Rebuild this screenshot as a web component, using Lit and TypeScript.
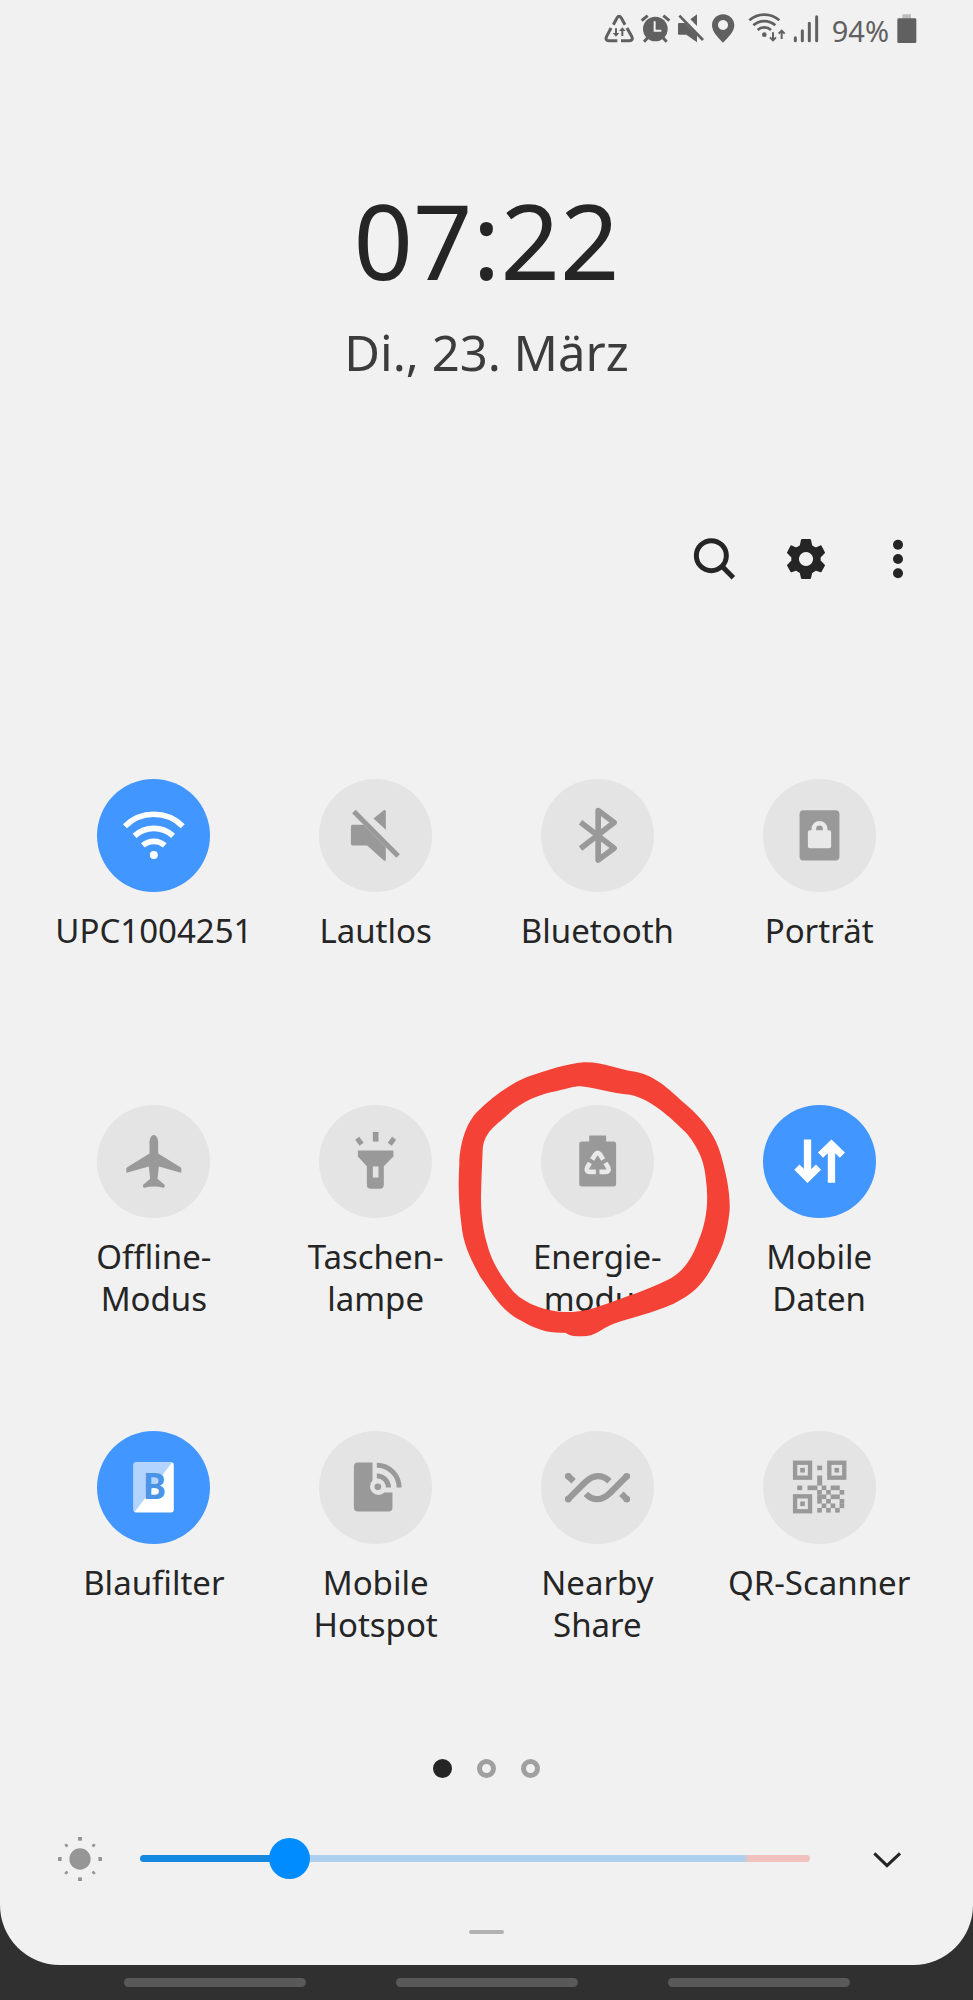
import { LitElement, html, svg, css, nothing } from "lit";
import { customElement, state } from "lit/decorators.js";
import { classMap } from "lit/directives/class-map.js";

interface Tile {
  id: string;
  lines: string[];
  on: boolean;
  marked?: boolean;
}

const TILES: Tile[] = [
  { id: "wifi", lines: ["UPC1004251"], on: true },
  { id: "mute", lines: ["Lautlos"], on: false },
  { id: "bluetooth", lines: ["Bluetooth"], on: false },
  { id: "portrait", lines: ["Porträt"], on: false },
  { id: "plane", lines: ["Offline-", "Modus"], on: false },
  { id: "torch", lines: ["Taschen-", "lampe"], on: false },
  { id: "energy", lines: ["Energie-", "modus"], on: false, marked: true },
  { id: "data", lines: ["Mobile", "Daten"], on: true },
  { id: "bluefilter", lines: ["Blaufilter"], on: true },
  { id: "hotspot", lines: ["Mobile", "Hotspot"], on: false },
  { id: "nearby", lines: ["Nearby", "Share"], on: false },
  { id: "qr", lines: ["QR-Scanner"], on: false },
];

const QR_ROWS = [".#.##.", "#.#..#", "##.##.", "#.#..#", ".#.#.#", "#.#.#."];

const finder = (x: number, y: number) => svg`
  <rect x=${x + 6.5} y=${y + 6.5} width="45" height="45" fill="none" stroke="currentColor" stroke-width="13"/>
  <rect x=${x + 22} y=${y + 22} width="14" height="14"/>`;

/* Tile glyphs, drawn on a 340-unit disc. */
const GLYPHS: Record<string, unknown> = {
  wifi: svg`
    <g fill="none" stroke="currentColor" stroke-width="17">
      <path d="M84 142A123 123 0 0 1 258 142"/>
      <path d="M113 171A86 86 0 0 1 229 171"/>
      <path d="M138 200A51 51 0 0 1 204 200"/>
    </g>
    <circle cx="171" cy="229" r="12"/>`,
  mute: svg`
    <path d="M101 138H134L201 205V242q0 7-6 3L145 200H101q-5 0-5-5V143q0-5 5-5z"/>
    <path d="M164 119L195 94q6-3 6 4V153z"/>
    <path d="M105 98L238 232" stroke="currentColor" stroke-width="15"/>`,
  bluetooth: svg`
    <path d="M119 130L220 208L172 244V95L220 131L119 209" fill="none" stroke="currentColor"
      stroke-width="17" stroke-linejoin="round"/>`,
  portrait: svg`
    <rect x="110" y="94" width="120" height="151" rx="12"/>
    <rect class="hole" x="135" y="154" width="70" height="54" rx="6"/>
    <path class="hole-line" d="M153 157V150a17 17 0 0 1 34 0V157" stroke-width="14"/>`,
  plane: svg`
    <path d="M171 90C180 90 184 104 184 112V146L251 187Q256 191 253 204L186 185L182 222L203 240Q206 247 200 249Q171 241 142 249Q136 247 139 240L160 222L156 185L89 204Q86 191 91 187L158 146V112C158 104 162 90 171 90Z"/>`,
  torch: svg`
    <path fill-rule="evenodd" d="M117 137H224V155L195 184V240q0 12-12 12H156q-12 0-12-12V184L117 155zM162 185V218H179V185z"/>
    <rect x="162" y="81" width="17" height="29"/>
    <path d="M115 100L128 118M226 100L213 118" stroke="currentColor" stroke-width="15"/>`,
  energy: svg`
    <path d="M145 92H196V110H218q8 0 8 8V237q0 8-8 8H123q-8 0-8-8V118q0-8 8-8H145z"/>
    <g class="hole-line" stroke-width="14">
      <path d="M154 164L163 149Q170 139 178 149L187 164"/>
      <path d="M147 174L139 188Q134 201 147 201H165"/>
      <path d="M194 174L202 188Q207 201 194 201H176"/>
    </g>`,
  data: svg`
    <g fill="none" stroke="currentColor" stroke-width="22">
      <path d="M134 104V220M102 187L134 219L167 187"/>
      <path d="M206 234V118M173 151L206 119L239 151"/>
    </g>`,
  bluefilter: svg`
    <rect x="110" y="94" width="121" height="151" rx="8"/>
    <path class="shade" d="M118 94H226L114 243Q110 241 110 237V102Q110 94 118 94z"/>
    <text class="letter" x="173" y="204" text-anchor="middle">B</text>`,
  hotspot: svg`
    <path d="M117 95H161V149A25 25 0 1 0 197 185H221V230q0 12-12 12H117q-12 0-12-12V107q0-12 12-12z"/>
    <circle cx="177" cy="168" r="10"/>
    <g fill="none" stroke="currentColor" stroke-width="15">
      <path d="M174 103A67 67 0 0 1 241 170"/>
      <path d="M174 135A35 35 0 0 1 209 170"/>
    </g>`,
  nearby: svg`
    <g fill="none" stroke="currentColor" stroke-width="19">
      <path d="M82 136L98 151"/>
      <path d="M82 205L130 157Q151 136 171 136Q190 136 206 151"/>
      <path d="M258 136L210 184Q189 205 169 205Q150 205 135 189"/>
      <path d="M258 205L242 189"/>
    </g>
    <circle cx="82" cy="136" r="10"/><circle cx="82" cy="205" r="10"/>
    <circle cx="258" cy="136" r="10"/><circle cx="258" cy="205" r="10"/>`,
  qr: svg`
    ${finder(90, 89)}${finder(193, 89)}${finder(90, 190)}
    <rect x="163" y="104" width="15" height="14"/>
    <rect x="103" y="164" width="15" height="14"/>
    <rect x="134" y="164" width="30" height="14"/>
    <rect x="163" y="134" width="15" height="30"/>
    ${QR_ROWS.map((row, r) =>
      [...row].map((cell, c) =>
        cell === "#"
          ? svg`<rect x=${163 + c * 13.5} y=${164 + r * 13.5} width="14" height="14"/>`
          : nothing
      )
    )}`,
};

@customElement("status-bar")
export class StatusBar extends LitElement {
  static styles = css`
    :host {
      display: flex;
      justify-content: flex-end;
      align-items: flex-start;
      gap: 13px;
      padding: 13px 56px 0;
      color: #606060;
    }
    .group {
      display: flex;
      gap: 6px;
    }
    .power {
      display: flex;
      gap: 8px;
    }
    .percent {
      font-size: 29px;
      line-height: 36px;
    }
    svg {
      display: block;
      height: 30px;
      fill: currentColor;
    }
    .line {
      fill: none;
      stroke: currentColor;
    }
    .cut {
      fill: none;
      stroke: #f1f1f1;
    }
    .tip {
      fill: #bdbdbd;
    }
  `;

  render() {
    return html`
      <div class="group">
        <svg viewBox="39 38 90 90" width="30" aria-hidden="true">
          <g class="line" stroke-width="9" stroke-linejoin="round">
            <path d="M67 73L78 53Q84 43 91 53L102 73" />
            <path d="M60 83L47 108Q41 121 54 121H79" />
            <path d="M108 83L122 108Q128 121 115 121H90" />
          </g>
          <path class="line" stroke-width="6" d="M75 84V103M94 107V88" />
          <path d="M65 98H85L75 109zM84 92H104L94 81z" />
        </svg>
        <svg viewBox="147 38 93 90" width="31" aria-hidden="true">
          <circle cx="193" cy="86" r="37" />
          <path class="line" stroke-width="9" d="M152 61L170 46M217 46L235 61" />
          <path class="line" stroke-width="9" d="M170 112L159 124M216 112L227 124" />
          <path class="cut" stroke-width="6" d="M191 63V91H211" />
        </svg>
        <svg viewBox="258 38 84 90" width="28" aria-hidden="true">
          <path d="M264 68H281L318 105V126L286 103H264q-3 0-3-3V71q0-3 3-3z" />
          <path d="M298 57L318 42V77z" />
          <path class="line" stroke-width="8" d="M265 46L336 119" />
        </svg>
        <svg viewBox="363 38 72 90" width="24" aria-hidden="true">
          <path fill-rule="evenodd"
            d="M399 42C419 42 433 57 433 75C433 94 414 112 399 127C384 112 366 94 366 75C366 57 380 42 399 42zM399 59a15 15 0 1 0 .1 0z" />
        </svg>
      </div>
      <div class="group">
        <svg viewBox="474 38 117 90" width="39" aria-hidden="true">
          <g class="line" stroke-width="8">
            <path d="M478 60A68 68 0 0 1 568 60" />
            <path d="M490 75A49 49 0 0 1 556 75" />
            <path d="M503 89A30 30 0 0 1 543 89" />
          </g>
          <circle cx="523" cy="103" r="7" />
          <g class="line" stroke-width="6">
            <path d="M549 96V120M540 111L549 120L558 111" />
            <path d="M575 116V91M566 100L575 91L584 100" />
          </g>
        </svg>
        <svg viewBox="609 38 78 90" width="26" aria-hidden="true">
          <path class="line" stroke-width="9" stroke-linecap="round"
            d="M616 112V121M637 91V121M658 69V121M680 49V121" />
        </svg>
      </div>
      <div class="power">
        <span class="percent">94%</span>
        <svg viewBox="921 38 60 90" width="20" aria-hidden="true">
          <path class="tip" d="M937 42H963V56H937z" />
          <rect x="922" y="54" width="57" height="74" rx="4" />
        </svg>
      </div>
    `;
  }
}

@customElement("quick-tile")
export class QuickTile extends LitElement {
  static properties = { tile: { attribute: false } };
  declare tile: Tile;

  static styles = css`
    :host {
      display: block;
      position: relative;
    }
    .tile {
      display: flex;
      flex-direction: column;
      align-items: center;
      gap: 18px;
      width: 100%;
      padding: 0;
      border: 0;
      background: none;
      font: inherit;
      color: #252525;
      cursor: pointer;
    }
    .disc {
      width: 113px;
      height: 113px;
      border-radius: 50%;
      background: #e4e4e4;
      color: #999999;
    }
    .disc.on {
      background: #4296ff;
      color: #ffffff;
    }
    .glyph {
      display: block;
      width: 100%;
      fill: currentColor;
    }
    .glyph .hole {
      fill: #e9e9e9;
    }
    .glyph .hole-line {
      fill: none;
      stroke: #e9e9e9;
    }
    .glyph .shade {
      fill: #b3d4ff;
    }
    .glyph .letter {
      fill: #4a94e8;
      font-size: 106px;
      font-weight: 700;
    }
    .label {
      min-height: 84px;
      font-size: 33px;
      line-height: 42px;
      white-space: nowrap;
    }
    .mark {
      position: absolute;
      z-index: 1;
      top: -43px;
      left: calc(50% - 139px);
      width: 272px;
      fill: #f44336;
      pointer-events: none;
    }
  `;

  render() {
    const { id, lines, on, marked } = this.tile;
    return html`
      <button class="tile" type="button" aria-pressed=${on ? "true" : "false"}>
        <span class=${classMap({ disc: true, on })}>
          <svg class="glyph" viewBox="0 0 340 340" aria-hidden="true">${GLYPHS[id]}</svg>
        </span>
        <span class="label">${lines.map((l, i) => (i ? html`<br />${l}` : l))}</span>
      </button>
      ${marked
        ? html`<svg class="mark" viewBox="53 35 816 824" aria-hidden="true">
            <path fill-rule="evenodd"
              d="M430 36C490 34 530 58 585 64C650 76 695 126 735 161C795 212 828 262 842 315C858 370 870 430 868 480C862 540 850 590 820 640C790 700 760 730 700 760C630 790 570 802 520 820C480 835 465 860 420 858C390 858 385 852 375 847C330 850 290 840 240 810C180 780 150 720 120 680C90 625 68 580 63 520C55 460 53 400 57 340C57 290 75 220 110 185C150 145 200 105 260 80C320 60 380 40 430 36Z
                 M420 108C470 112 510 130 570 133C630 145 690 200 740 250C780 300 793 340 797 390C805 450 800 510 775 570C750 640 720 670 680 690C620 720 560 738 500 760C460 772 440 785 370 785C320 782 260 765 220 725C190 690 155 640 140 580C125 530 122 480 122 440C123 390 125 350 127 300C130 250 160 230 200 195C240 155 300 130 350 122C380 115 400 108 420 108Z" />
          </svg>`
        : nothing}
    `;
  }
}

@customElement("app-root")
export class AppRoot extends LitElement {
  @state() private brightness = 41;
  @state() private page = 0;

  static styles = css`
    :host {
      display: flex;
      flex-direction: column;
      min-height: 100vh;
      background: #303030;
      font-family: "Noto Sans", "Open Sans", sans-serif;
    }
    .panel {
      flex: 1;
      display: flex;
      flex-direction: column;
      padding-bottom: 31px;
      border-radius: 0 0 60px 60px;
      background: #f1f1f1;
      color: #252525;
    }
    .clock {
      margin-top: 139px;
      text-align: center;
    }
    .time {
      display: block;
      font-size: 104px;
      line-height: 104px;
    }
    .date {
      display: block;
      margin-top: 30px;
      font-size: 49px;
      line-height: 60px;
      color: #3c3c3c;
    }
    .tools {
      display: flex;
      justify-content: flex-end;
      gap: 32px;
      margin-top: 147px;
      padding: 0 45px;
    }
    .icon-button {
      flex: none;
      width: 60px;
      padding: 0;
      border: 0;
      background: none;
      color: #252525;
      cursor: pointer;
    }
    .icon-button svg {
      display: block;
      width: 60px;
      fill: currentColor;
    }
    .icon-button .line {
      fill: none;
      stroke: currentColor;
    }
    .tiles {
      display: grid;
      grid-template-columns: repeat(4, minmax(0, 1fr));
      row-gap: 111px;
      margin-top: 190px;
      padding: 0 43px;
    }
    .pager {
      display: flex;
      justify-content: center;
      gap: 25px;
      margin-top: 113px;
    }
    .dot {
      width: 19px;
      height: 19px;
      padding: 0;
      border: 5px solid #a0a0a0;
      border-radius: 50%;
      background: none;
      cursor: pointer;
    }
    .dot.current {
      border-color: #252525;
      background: #252525;
    }
    .brightness {
      display: flex;
      align-items: center;
      height: 41px;
      margin-top: 60px;
      padding: 0 56px 0 58px;
    }
    .sun {
      flex: none;
      width: 44px;
      fill: #969696;
    }
    .slider {
      flex: 1;
      min-width: 0;
      height: 41px;
      margin: 0 47px 0 38px;
      appearance: none;
      -webkit-appearance: none;
      background: none;
    }
    .slider::-webkit-slider-runnable-track {
      height: 7px;
      border-radius: 4px;
      background: linear-gradient(
        to right,
        #1488e0 var(--level),
        #acd0ed var(--level),
        #acd0ed 90%,
        #f1c1be 91%
      );
    }
    .slider::-webkit-slider-thumb {
      -webkit-appearance: none;
      width: 41px;
      height: 41px;
      margin-top: -17px;
      border-radius: 50%;
      background: #008cff;
    }
    .grip {
      align-self: center;
      width: 35px;
      height: 4px;
      margin-top: 51px;
      border-radius: 2px;
      background: #b2b2b2;
    }
    .nav {
      display: flex;
      justify-content: center;
      gap: 90px;
      padding: 13px 0;
    }
    .pill {
      width: 182px;
      height: 9px;
      padding: 0;
      border: 0;
      border-radius: 5px;
      background: #595959;
    }
  `;

  private onBrightness(e: Event) {
    this.brightness = Number((e.target as HTMLInputElement).value);
  }

  render() {
    return html`
      <main class="panel">
        <status-bar></status-bar>
        <header class="clock">
          <time class="time">07:22</time>
          <time class="date">Di., 23. März</time>
        </header>
        <div class="tools">
          <button class="icon-button" type="button" aria-label="Suchen">
            <svg viewBox="0 0 180 180" aria-hidden="true">
              <circle class="line" cx="82" cy="80" r="45" stroke-width="15" />
              <path class="line" d="M114 112L148 146" stroke-width="15" />
            </svg>
          </button>
          <button class="icon-button" type="button" aria-label="Einstellungen">
            <svg viewBox="0 0 180 180" aria-hidden="true">
              <path fill-rule="evenodd" stroke="currentColor" stroke-width="6" stroke-linejoin="round"
                d="M78 33H102L106 51L119 59L134 52L144 71L131 84V96L144 109L134 127L119 122L106 130L102 147H78L74 130L61 122L46 127L36 109L49 96V84L36 71L46 52L61 59L74 51zM90 66a24 24 0 1 0 .1 0z" />
            </svg>
          </button>
          <button class="icon-button" type="button" aria-label="Mehr Optionen">
            <svg viewBox="0 0 180 180" aria-hidden="true">
              <circle cx="90" cy="47" r="15" /><circle cx="90" cy="90" r="15" /><circle cx="90" cy="133" r="15" />
            </svg>
          </button>
        </div>
        <section class="tiles">
          ${TILES.map((tile) => html`<quick-tile .tile=${tile}></quick-tile>`)}
        </section>
        <nav class="pager">
          ${[0, 1, 2].map(
            (i) => html`<button
              type="button"
              class=${classMap({ dot: true, current: i === this.page })}
              aria-label="Seite ${i + 1}"
              @click=${() => (this.page = i)}
            ></button>`
          )}
        </nav>
        <div class="brightness">
          <svg class="sun" viewBox="0 0 132 132" aria-hidden="true">
            <circle cx="66" cy="66" r="32" />
            ${[0, 90, 180, 270].map(
              (a) => svg`<rect x="60" y="0" width="12" height="11" transform="rotate(${a} 66 66)"/>`
            )}
            ${[45, 135, 225, 315].map(
              (a) => svg`<rect x="62" y="3" width="8" height="10" rx="2" transform="rotate(${a} 66 66)"/>`
            )}
          </svg>
          <input
            class="slider"
            type="range"
            min="0"
            max="200"
            aria-label="Helligkeit"
            style="--level: ${this.brightness / 2}%"
            .value=${String(this.brightness)}
            @input=${this.onBrightness}
          />
          <button class="icon-button" type="button" aria-label="Ausklappen">
            <svg viewBox="0 0 180 120" aria-hidden="true">
              <path class="line" d="M52 43L90 80L129 43" stroke-width="9" />
            </svg>
          </button>
        </div>
        <div class="grip"></div>
      </main>
      <footer class="nav">
        <button class="pill" type="button" aria-label="Letzte Apps"></button>
        <button class="pill" type="button" aria-label="Startseite"></button>
        <button class="pill" type="button" aria-label="Zurück"></button>
      </footer>
    `;
  }
}
